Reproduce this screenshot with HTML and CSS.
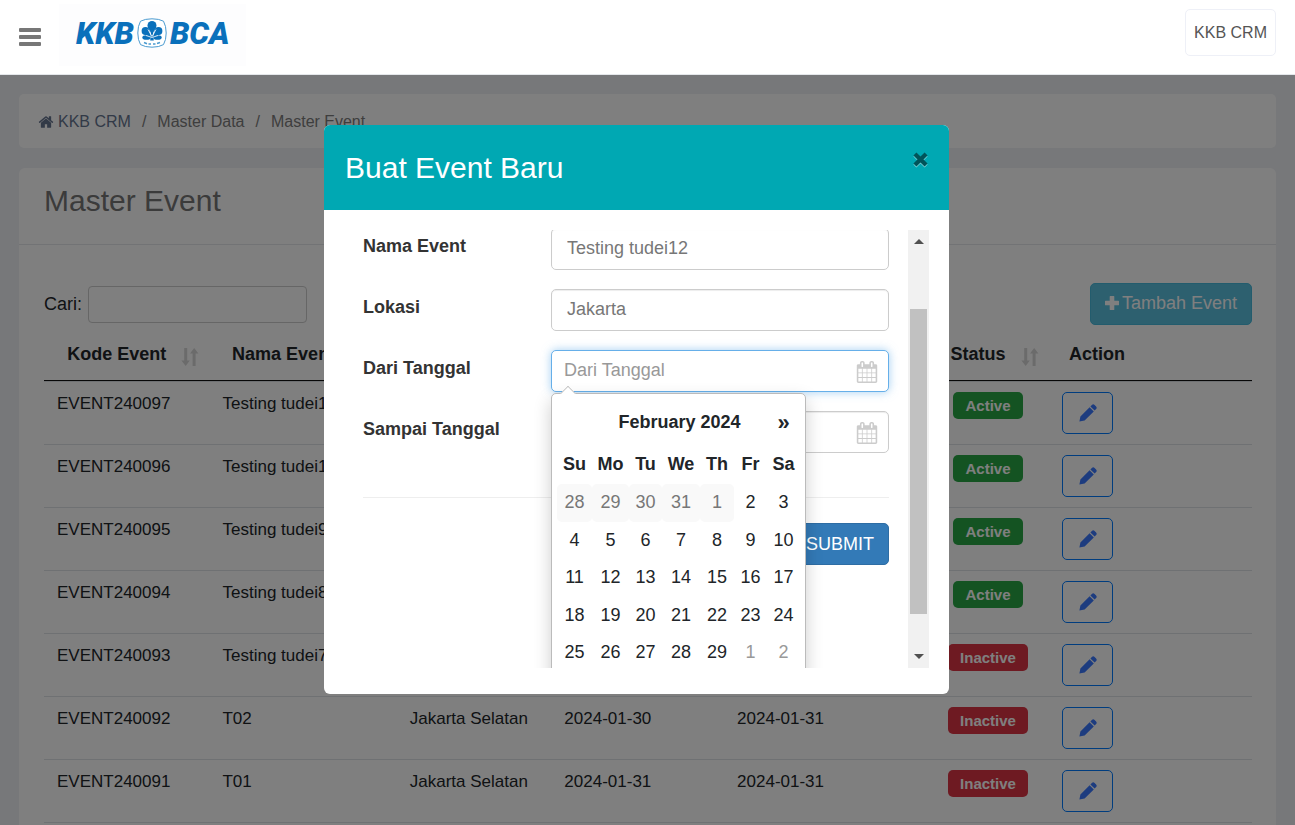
FILE: index.html
```
<!DOCTYPE html>
<html lang="id">
<head>
<meta charset="utf-8">
<title>KKB CRM - Master Event</title>
<link rel="stylesheet" href="styles.css">
</head>
<body>
<svg class="sprite" aria-hidden="true">
  <symbol id="i-home" viewBox="0 0 1792 1792"><path d="M1472 992v480q0 26-19 45t-45 19h-384v-384h-256v384h-384q-26 0-45-19t-19-45v-480q0-1 .5-3t.5-3l575-474 575 474q1 2 1 6zm223-69l-62 74q-8 9-21 11h-3q-13 0-21-7l-692-577-692 577q-12 8-24 7-13-2-21-11l-62-74q-8-10-7-23.5t11-21.5l719-599q32-26 76-26t76 26l244 204v-195q0-14 9-23t23-9h192q14 0 23 9t9 23v408l219 182q10 8 11 21.5t-7 23.5z"/></symbol>
  <symbol id="i-calendar" viewBox="0 0 1792 1792"><path d="M192 1664h288v-288h-288v288zm352 0h320v-288h-320v288zm-352-352h288v-320h-288v320zm352 0h320v-320h-320v320zm-352-384h288v-288h-288v288zm736 736h320v-288h-320v288zm-384-736h320v-288h-320v288zm768 736h288v-288h-288v288zm-384-352h320v-320h-320v320zm-352-864v-288q0-13-9.5-22.5t-22.5-9.5h-64q-13 0-22.5 9.5t-9.5 22.5v288q0 13 9.5 22.5t22.5 9.5h64q13 0 22.5-9.5t9.5-22.5zm736 864h288v-320h-288v320zm-384-384h320v-288h-320v288zm384 0h288v-288h-288v288zm32-480v-288q0-13-9.5-22.5t-22.5-9.5h-64q-13 0-22.5 9.5t-9.5 22.5v288q0 13 9.5 22.5t22.5 9.5h64q13 0 22.5-9.5t9.5-22.5zm384-64v1280q0 52-38 90t-90 38h-1408q-52 0-90-38t-38-90v-1280q0-52 38-90t90-38h128v-96q0-66 47-113t113-47h64q66 0 113 47t47 113v96h384v-96q0-66 47-113t113-47h64q66 0 113 47t47 113v96h128q52 0 90 38t38 90z"/></symbol>
  <symbol id="i-sort" viewBox="0 0 18 18"><path d="M3.200 0h3v12.500h2.600L4.700 18 .4 12.500h2.800zM11.600 18h3V5.500h2.800L13.200 0 9 5.500h2.600z"/></symbol>
  <symbol id="i-pencil" viewBox="0 0 18 18"><path d="M.4 17.600l1-5.200L10.600 3.200l4.200 4.200-9.200 9.200zM11.400 2.400l1.500-1.500q1.300-1.200 2.700 0l1.500 1.500q1.200 1.300 0 2.700l-1.500 1.500z"/></symbol>
  <symbol id="i-plus" viewBox="0 0 14 14"><path d="M5.300 0h3.400q.6 0 .6.600v4.100h4.100q.6 0 .6.600v3.400q0 .6-.6.600H9.300v4.100q0 .6-.6.600H5.300q-.6 0-.6-.6V9.300H.6q-.6 0-.6-.6V5.300q0-.6.6-.6h4.100V.6q0-.6.6-.6z"/></symbol>
  <symbol id="i-close" viewBox="0 0 14 14"><path d="M3.200.4L7 4.200 10.800.4l2.800 2.800L9.800 7l3.800 3.800-2.800 2.800L7 9.800l-3.800 3.800-2.800-2.800L4.200 7 .4 3.200z"/></symbol>
</svg>

<header class="topbar">
  <button class="menu" type="button" aria-label="Menu"><svg viewBox="0 0 22 18"><rect width="22" height="4" rx="1"/><rect y="7" width="22" height="4" rx="1"/><rect y="14" width="22" height="4" rx="1"/></svg></button>
  <a class="brand" href="#" aria-label="KKB BCA">
    <span>KKB</span>
    <svg class="emblem" viewBox="0 0 30 30">
      <path d="M15 .8Q22 .8 26.500 3.200Q29.200 8 29.200 15Q29.200 22 26.500 26.600Q22 29.200 15 29.200Q8 29.200 3.500 26.600Q.8 22 .8 15Q.8 8 3.500 3.200Q8 .8 15 .8z" fill="#fff" stroke="#4b9bd0"/>
      <g fill="#0a70bb"><circle cx="15" cy="7.500" r="4.500"/><path d="M10.800 9L15 17l4.200-8z"/><circle cx="8.500" cy="13" r="3.900"/><path d="M5.800 15.500l8.200 3.500-2.500-8z"/><circle cx="21.500" cy="13" r="3.900"/><path d="M24.200 15.500L16 19l2.500-8z"/><ellipse cx="9.500" cy="19.500" rx="4.200" ry="2.300"/><ellipse cx="20.500" cy="19.500" rx="4.200" ry="2.300"/><path d="M14 14h2l.8 8.500h-3.600z"/></g>
      <g stroke="#fff" stroke-width=".8" fill="none"><path d="M11 11.500L15 18.500l4-7M9 17.500l6 2 6-2"/></g>
      <path d="M7 24.500l3 1.200M11.500 26h2.500M16 26h2.500M20 25.500l3-1" stroke="#4b9bd0" stroke-width="1.500"/>
    </svg>
    <span>BCA</span>
  </a>
  <button class="account" type="button">KKB CRM</button>
</header>

<main class="page">
  <nav class="breadcrumb" aria-label="Breadcrumb">
    <a class="home" href="#"><svg><use href="#i-home"/></svg>KKB CRM</a><i>/</i><a href="#">Master Data</a><i>/</i><span>Master Event</span>
  </nav>

  <section class="card">
    <h1 class="card-title">Master Event</h1>
    <div class="card-body">
      <div class="toolbar">
        <label for="cari">Cari:</label>
        <input id="cari" class="search" type="text">
        <button class="add" type="button"><svg><use href="#i-plus"/></svg>Tambah Event</button>
      </div>
      <table class="events">
        <colgroup><col class="c-code"><col class="c-name"><col class="c-place"><col class="c-from"><col class="c-to"><col class="c-status"><col></colgroup>
        <thead><tr>
          <th><div class="sort"><span>Kode Event</span><svg><use href="#i-sort"/></svg></div></th>
          <th class="name"><div class="sort"><span>Nama Event</span><svg><use href="#i-sort"/></svg></div></th>
          <th></th>
          <th></th>
          <th></th>
          <th><div class="sort"><span>Status</span><svg><use href="#i-sort"/></svg></div></th>
          <th class="action">Action</th>
        </tr></thead>
        <tbody>
          <tr><td>EVENT240097</td><td>Testing tudei12</td><td></td><td></td><td></td><td class="status"><span class="badge on">Active</span></td><td><button class="edit" type="button" aria-label="Edit"><svg><use href="#i-pencil"/></svg></button></td></tr>
          <tr><td>EVENT240096</td><td>Testing tudei10</td><td></td><td></td><td></td><td class="status"><span class="badge on">Active</span></td><td><button class="edit" type="button" aria-label="Edit"><svg><use href="#i-pencil"/></svg></button></td></tr>
          <tr><td>EVENT240095</td><td>Testing tudei9</td><td></td><td></td><td></td><td class="status"><span class="badge on">Active</span></td><td><button class="edit" type="button" aria-label="Edit"><svg><use href="#i-pencil"/></svg></button></td></tr>
          <tr><td>EVENT240094</td><td>Testing tudei8</td><td></td><td></td><td></td><td class="status"><span class="badge on">Active</span></td><td><button class="edit" type="button" aria-label="Edit"><svg><use href="#i-pencil"/></svg></button></td></tr>
          <tr><td>EVENT240093</td><td>Testing tudei7</td><td></td><td></td><td></td><td class="status"><span class="badge off">Inactive</span></td><td><button class="edit" type="button" aria-label="Edit"><svg><use href="#i-pencil"/></svg></button></td></tr>
          <tr><td>EVENT240092</td><td>T02</td><td>Jakarta Selatan</td><td>2024-01-30</td><td>2024-01-31</td><td class="status"><span class="badge off">Inactive</span></td><td><button class="edit" type="button" aria-label="Edit"><svg><use href="#i-pencil"/></svg></button></td></tr>
          <tr><td>EVENT240091</td><td>T01</td><td>Jakarta Selatan</td><td>2024-01-31</td><td>2024-01-31</td><td class="status"><span class="badge off">Inactive</span></td><td><button class="edit" type="button" aria-label="Edit"><svg><use href="#i-pencil"/></svg></button></td></tr>
        </tbody>
      </table>
    </div>
  </section>
</main>

<div class="backdrop">
  <div class="modal" role="dialog" aria-labelledby="modal-title">
    <div class="modal-head">
      <h2 id="modal-title">Buat Event Baru</h2>
      <button class="close" type="button" aria-label="Tutup"><svg><use href="#i-close"/></svg></button>
    </div>
    <div class="modal-body">
      <form class="form">
        <div class="field"><label for="nama">Nama Event</label><input id="nama" class="text" type="text" value="Testing tudei12"></div>
        <div class="field"><label for="lokasi">Lokasi</label><input id="lokasi" class="text" type="text" value="Jakarta"></div>
        <div class="field"><label for="dari">Dari Tanggal</label>
          <div class="date active"><input id="dari" type="text" placeholder="Dari Tanggal"><svg><use href="#i-calendar"/></svg>
            <div class="picker">
              <table>
                <colgroup><col class="d35"><col class="d37"><col class="d33"><col class="d38"><col class="d34"><col class="d33"><col class="d33"></colgroup>
                <thead>
                  <tr class="month"><th></th><th colspan="5">February 2024</th><th class="next">»</th></tr>
                  <tr><th>Su</th><th>Mo</th><th>Tu</th><th>We</th><th>Th</th><th>Fr</th><th>Sa</th></tr>
                </thead>
                <tbody>
                  <tr><td class="off-day">28</td><td class="off-day">29</td><td class="off-day">30</td><td class="off-day">31</td><td class="off-day">1</td><td>2</td><td>3</td></tr>
                  <tr><td>4</td><td>5</td><td>6</td><td>7</td><td>8</td><td>9</td><td>10</td></tr>
                  <tr><td>11</td><td>12</td><td>13</td><td>14</td><td>15</td><td>16</td><td>17</td></tr>
                  <tr><td>18</td><td>19</td><td>20</td><td>21</td><td>22</td><td>23</td><td>24</td></tr>
                  <tr><td>25</td><td>26</td><td>27</td><td>28</td><td>29</td><td class="later">1</td><td class="later">2</td></tr>
                </tbody>
              </table>
            </div>
          </div>
        </div>
        <div class="field"><label for="sampai">Sampai Tanggal</label>
          <div class="date"><input id="sampai" type="text"><svg><use href="#i-calendar"/></svg></div>
        </div>
        <div class="form-foot"><button class="submit" type="button">SUBMIT</button></div>
      </form>
      <div class="scrollbar" aria-hidden="true">
        <svg viewBox="0 0 10 5"><path d="M5 0l5 5H0z"/></svg>
        <div class="track"><div class="thumb"></div></div>
        <svg viewBox="0 0 10 5"><path d="M0 0h10L5 5z"/></svg>
      </div>
    </div>
  </div>
</div>
</body>
</html>
```

FILE: styles.css
```
* { box-sizing: border-box; }
body {
  margin: 0;
  height: 100vh;
  overflow: hidden;
  display: flex;
  flex-direction: column;
  background: #eef0f4;
  color: #212529;
  font: 18px/24px "Liberation Sans", Arial, sans-serif;
}
button, input { font: inherit; color: inherit; margin: 0; }
button { padding: 0; cursor: pointer; }
a { color: inherit; text-decoration: none; }
svg { fill: currentColor; display: block; flex: none; }
.sprite { position: absolute; width: 0; height: 0; }

/* top bar */
.topbar {
  position: relative;
  z-index: 5;
  flex: none;
  display: flex;
  align-items: center;
  height: 75px;
  padding: 0 19px;
  background: #fff;
  border-bottom: 1px solid #e4e7ea;
}
.menu { border: 0; background: none; color: #777; }
.menu svg { width: 22px; height: 18px; }
.brand {
  display: flex;
  align-items: center;
  gap: 3px;
  height: 62px;
  margin: 0 auto 4px 18px;
  padding: 0 16px 4px 17px;
  background: #fdfdfe;
  color: #0a70bb;
  font: italic 900 31px/40px Roboto, sans-serif;
}
.brand span { padding-top: 2px; }
.emblem { width: 30px; height: 30px; }
.account {
  height: 47px;
  margin-bottom: 9px;
  padding: 1px 8px 0;
  border: 1px solid #eef0f7;
  border-radius: 5px;
  background: #fff;
  color: #555;
  font-size: 16px;
}

/* page */
.page {
  flex: 1;
  min-height: 0;
  display: flex;
  flex-direction: column;
  gap: 20px;
  padding: 19px 19px 0;
}
.breadcrumb {
  flex: none;
  display: flex;
  align-items: center;
  gap: 11px;
  height: 54px;
  padding: 2px 19px 0;
  border-radius: 5px;
  background: #fff;
  color: #7c7c7c;
  font-size: 16px;
}
.breadcrumb i { font-style: normal; }
.home { display: flex; align-items: center; gap: 4px; color: #65748f; }
.home svg { width: 16px; height: 16px; }
.card { flex: 1; border-radius: 6px 6px 0 0; background: #fff; }
.card-title {
  height: 77px;
  margin: 0;
  padding: 13px 25px;
  border-bottom: 1px solid #e4e7ea;
  color: #777;
  font-size: 30px;
  font-weight: 400;
  line-height: 40px;
}
.card-body { padding: 38px 24px 0 25px; }
.toolbar { display: flex; align-items: center; gap: 6px; }
.search {
  width: 219px;
  height: 37px;
  border: 1px solid #ccc;
  border-radius: 4px;
  background: #fff;
}
.add {
  display: flex;
  align-items: center;
  gap: 3px;
  height: 42px;
  margin-left: auto;
  padding: 0 14px 3px;
  border: 1px solid #46b8da;
  border-radius: 5px;
  background: #5bc0de;
  color: #fff;
}
.add svg { width: 14px; height: 14px; }

.events {
  width: 100%;
  table-layout: fixed;
  border-collapse: separate;
  border-spacing: 0;
  border-bottom: 1px solid #dee2e6;
}
.c-code { width: 13.700%; }
.c-name { width: 15.500%; }
.c-place { width: 12.800%; }
.c-from { width: 14.300%; }
.c-to { width: 16.800%; }
.c-status { width: 10.100%; }
.events th { height: 56px; padding: 2px 10px 0 12px; border-bottom: 1px solid #111; }
.events .name { padding-right: 29px; }
.events td {
  height: 63px;
  padding: 10px 13px;
  border-top: 1px solid #dee2e6;
  font-size: 17px;
  vertical-align: top;
}
.sort { display: flex; align-items: center; gap: 4px; }
.sort span { flex: 1; white-space: nowrap; }
.sort svg { width: 18px; height: 18px; margin-top: 6px; color: #d6d6d6; }
.events .action { padding-left: 20px; text-align: left; }
.events .status { padding-left: 0; padding-right: 0; text-align: center; }
.badge {
  display: inline-block;
  padding: 0 12px;
  border-radius: 5px;
  color: #fff;
  font-size: 15px;
  font-weight: 700;
  line-height: 27px;
}
.on { background: #28a745; }
.off { background: #dc3545; }
.edit {
  display: grid;
  place-items: center;
  width: 51px;
  height: 42px;
  border: 1px solid #007bff;
  border-radius: 5px;
  background: none;
  color: #3b78ff;
}
.edit svg { width: 18px; height: 18px; }

/* modal */
.backdrop {
  position: fixed;
  inset: 75px 0 0;
  z-index: 3;
  padding: 50px 22px 0 0;
  background: rgba(0, 0, 0, .5);
}
.modal {
  width: 625px;
  margin: 0 auto;
  overflow: hidden;
  border-radius: 6px;
  background: #fff;
}
.modal-head {
  display: flex;
  align-items: flex-start;
  justify-content: space-between;
  padding: 23px 21px 22px;
  background: #00a8b3;
  color: #fff;
}
.modal-head h2 { margin: 0; font-size: 30px; font-weight: 400; line-height: 40px; }
.close { margin-top: 4px; border: 0; background: none; color: #00545a; }
.close svg { width: 15px; height: 15px; filter: drop-shadow(0 1px 0 #7fd3d9); }
.modal-body { display: flex; height: 484px; padding: 20px 20px 26px 39px; }
.form {
  flex: 1;
  display: flex;
  flex-direction: column;
  gap: 19px;
  overflow: hidden;
  margin-left: -39px;
  padding: 0 19px 0 39px;
}
.field { flex: none; display: flex; height: 42px; }
.field:first-child { margin-top: -2px; }
.field label { width: 188px; padding-top: 6px; color: #333; font-weight: 700; }
.text, .date input {
  width: 100%;
  height: 42px;
  border: 1px solid #ccc;
  border-radius: 5px;
  background: #fff;
  color: #777;
  outline: 0;
  box-shadow: inset 0 1px 1px rgba(0, 0, 0, .075);
}
.text { flex: 1; padding: 0 15px 1px; }
.date { position: relative; flex: 1; }
.date input { padding: 0 12px 1px; }
.date input::placeholder { color: #999; }
.date > svg { position: absolute; right: 11px; top: 11px; width: 22px; height: 22px; color: #ccc; }
.active input { border-color: #66afe9; box-shadow: 0 0 10px rgba(102, 175, 233, .6); }
.form-foot {
  display: flex;
  justify-content: flex-end;
  margin-top: 25px;
  padding-top: 25px;
  border-top: 1px solid #eee;
}
.submit {
  height: 42px;
  padding: 0 14px;
  border: 1px solid #2e6da4;
  border-radius: 5px;
  background: #337ab7;
  color: #fff;
}

.picker {
  position: absolute;
  left: 0;
  top: 43px;
  z-index: 2;
  width: 255px;
  height: 330px;
  padding: 5px;
  border: 1px solid #bbb;
  border-radius: 5px;
  background: #fff;
  box-shadow: 0 7px 18px rgba(0, 0, 0, .2);
}
.picker::before {
  content: "";
  position: absolute;
  left: 10px;
  top: -6px;
  width: 11px;
  height: 11px;
  border: 1px solid #bbb;
  border-width: 1px 0 0 1px;
  background: #fff;
  clip-path: polygon(0 0, 100% 0, 0 100%);
  transform: rotate(45deg);
}
.picker table { width: 243px; table-layout: fixed; border-collapse: separate; border-spacing: 0; color: #212529; }
.picker th, .picker td { height: 38px; padding: 0 0 2px; border-radius: 5px; text-align: center; }
.picker tr:nth-child(even) td { height: 37px; }
.picker .month th { height: 47px; }
.picker .month .next { padding: 0; font-size: 22px; }
.picker .off-day { background: #f9f9f9; color: #777; }
.picker .later { color: #999; }
.d33 { width: 33px; }
.d34 { width: 34px; }
.d35 { width: 35px; }
.d37 { width: 37px; }
.d38 { width: 38px; }

.scrollbar {
  flex: none;
  display: flex;
  flex-direction: column;
  align-items: center;
  justify-content: space-between;
  width: 21px;
  padding: 9px 2px;
  background: #f1f1f1;
  color: #505050;
}
.scrollbar svg { width: 10px; height: 5px; }
.track { flex: 1; width: 100%; padding: 65px 0 40px; }
.thumb { height: 100%; background: #c1c1c1; }
```
